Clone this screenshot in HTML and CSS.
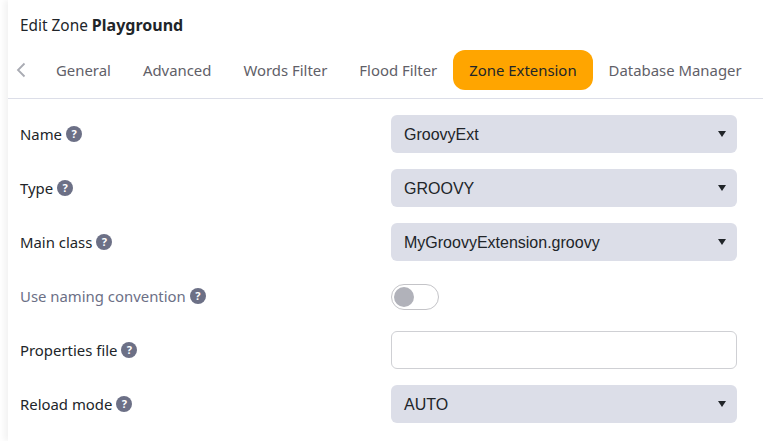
FILE: index.html
```html
<!DOCTYPE html>
<html lang="en">
<head>
    <meta charset="UTF-8">
    <meta name="viewport" content="width=device-width, initial-scale=1.0">
    <title>Edit Zone</title>
    <link rel="stylesheet" href="styles.css">
</head>
<body>
    <div class="panel">
        <h1 class="title">Edit Zone <strong>Playground</strong></h1>

        <div class="tabs">
            <svg class="tabs-back" width="10" height="16" viewBox="0 0 10 16">
                <path d="M8.5 1.5 L2 8 L8.5 14.5" fill="none" stroke="#a9abb3" stroke-width="1.8"/>
            </svg>
            <div class="tab">General</div>
            <div class="tab">Advanced</div>
            <div class="tab">Words Filter</div>
            <div class="tab">Flood Filter</div>
            <div class="tab active">Zone Extension</div>
            <div class="tab">Database Manager</div>
        </div>

        <form class="fields">
            <div class="row">
                <label class="label">Name <span class="help">?</span></label>
                <div class="select">GroovyExt</div>
            </div>
            <div class="row">
                <label class="label">Type <span class="help">?</span></label>
                <div class="select">GROOVY</div>
            </div>
            <div class="row">
                <label class="label">Main class <span class="help">?</span></label>
                <div class="select">MyGroovyExtension.groovy</div>
            </div>
            <div class="row">
                <label class="label disabled">Use naming convention <span class="help">?</span></label>
                <div class="toggle"><span class="knob"></span></div>
            </div>
            <div class="row">
                <label class="label">Properties file <span class="help">?</span></label>
                <input class="text-input" type="text">
            </div>
            <div class="row">
                <label class="label">Reload mode <span class="help">?</span></label>
                <div class="select">AUTO</div>
            </div>
        </form>
    </div>
</body>
</html>
```

FILE: styles.css
```css
html, body {
    height: 100%;
}
body {
    margin: 0;
    background-color: #ffffff;
    font-family: "Noto Sans", Arial, sans-serif;
    color: #212529;
    overflow: hidden;
}
.panel {
    height: 100%;
    margin-left: 8px;
    box-shadow: -4px 0 6px rgba(0, 0, 0, 0.05);
    box-sizing: border-box;
}
.title {
    margin: 0;
    padding: 14px 0 0 12px;
    height: 50px;
    box-sizing: border-box;
    font-size: 15.4px;
    line-height: 22px;
    font-weight: 400;
}
.title strong {
    font-size: 16px;
    font-weight: 700;
}
.tabs {
    display: flex;
    align-items: center;
    height: 49px;
    padding-bottom: 8px;
    box-sizing: border-box;
    border-bottom: 1px solid #dcdee8;
}
.tabs-back {
    margin-left: 8px;
    margin-right: 14px;
}
.tab {
    height: 40px;
    padding: 0 16px;
    display: flex;
    align-items: center;
    border-radius: 12px;
    font-size: 14.9px;
    color: #5f6068;
    white-space: nowrap;
}
.tab.active {
    background-color: #ffa500;
    color: #212529;
}
.fields {
    display: flex;
    flex-direction: column;
    gap: 16px;
    padding: 16px 26px 0 12px;
}
.row {
    display: flex;
    align-items: center;
    height: 38px;
}
.label {
    width: 371px;
    font-size: 14.9px;
    display: flex;
    align-items: center;
    gap: 4px;
}
.label.disabled {
    color: #6c7086;
}
.help {
    width: 16px;
    height: 16px;
    border-radius: 50%;
    background-color: #6c7086;
    color: #ffffff;
    font-size: 11px;
    font-weight: 700;
    line-height: 16px;
    text-align: center;
}
.select {
    flex: 1;
    height: 38px;
    padding: 1px 0 0 13px;
    box-sizing: border-box;
    display: flex;
    align-items: center;
    background-color: #dcdee8;
    border-radius: 6px;
    font-family: "Liberation Sans", Arial, sans-serif;
    font-size: 16px;
    position: relative;
}
.select::after {
    content: "";
    position: absolute;
    right: 11px;
    top: 16px;
    border-left: 4px solid transparent;
    border-right: 4px solid transparent;
    border-top: 6px solid #212529;
}
.toggle {
    width: 48px;
    height: 26px;
    margin-top: 1px;
    box-sizing: border-box;
    border: 1px solid #c4c4c8;
    border-radius: 13px;
    padding: 2px;
}
.knob {
    display: block;
    width: 20px;
    height: 20px;
    border-radius: 50%;
    background-color: #b1b2ba;
}
.text-input {
    flex: 1;
    height: 38px;
    box-sizing: border-box;
    border: 1px solid #cfd0d4;
    border-radius: 6px;
    background: #ffffff;
}
```
